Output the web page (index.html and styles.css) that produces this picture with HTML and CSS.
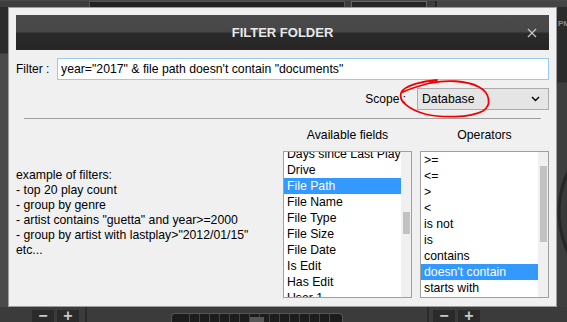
FILE: index.html
```html
<!DOCTYPE html>
<html>
  <head>
    <title>Filter Folder</title>
    <link rel="stylesheet" href="styles.css">
  </head>
  <body>
    <div class="app">
      <div class="top-strip">
        <div class="top-a"></div>
        <div class="top-b"></div>
        <div class="top-c"></div>
        <div class="top-d"></div>
      </div>
      <div class="left-strip"></div>

      <div class="dialog">
        <div class="titlebar">
          <span class="title">FILTER FOLDER</span>
          <svg class="close" width="10" height="10" viewBox="0 0 10 10">
            <path d="M1 1 L9 9 M9 1 L1 9" stroke="#c4c4c4" stroke-width="1.3"/>
          </svg>
        </div>

        <div class="filter-row">
          <span class="label">Filter :</span>
          <input class="filter-input" type="text" value='year="2017" &amp; file path doesn&#39;t contain "documents"'>
        </div>

        <div class="scope-row">
          <span class="label">Scope :</span>
          <div class="select">
            <span>Database</span>
            <svg class="chevron" width="9" height="6" viewBox="0 0 9 6">
              <polyline points="1,1 4.5,4.5 8,1" fill="none" stroke="#000" stroke-width="1.4"/>
            </svg>
          </div>
        </div>

        <div class="sep"></div>

        <div class="lower">
          <div class="examples">
            <div>example of filters:</div>
            <div>- top 20 play count</div>
            <div>- group by genre</div>
            <div>- artist contains "guetta" and year&gt;=2000</div>
            <div>- group by artist with lastplay&gt;"2012/01/15"</div>
            <div>etc...</div>
          </div>

          <div class="col">
            <div class="col-title">Available fields</div>
            <div class="listbox">
              <div class="items fields-items">
                <div class="item">Days since Last Played</div>
                <div class="item">Drive</div>
                <div class="item selected">File Path</div>
                <div class="item">File Name</div>
                <div class="item">File Type</div>
                <div class="item">File Size</div>
                <div class="item">File Date</div>
                <div class="item">Is Edit</div>
                <div class="item">Has Edit</div>
                <div class="item">User 1</div>
              </div>
              <div class="scrollbar">
                <div class="thumb fields-thumb"></div>
              </div>
            </div>
          </div>

          <div class="col">
            <div class="col-title">Operators</div>
            <div class="listbox">
              <div class="items">
                <div class="item">&gt;=</div>
                <div class="item">&lt;=</div>
                <div class="item">&gt;</div>
                <div class="item">&lt;</div>
                <div class="item">is not</div>
                <div class="item">is</div>
                <div class="item">contains</div>
                <div class="item selected">doesn't contain</div>
                <div class="item">starts with</div>
              </div>
              <div class="scrollbar">
                <div class="thumb ops-thumb"></div>
              </div>
            </div>
          </div>
        </div>

        <!-- red marker scribble around the scope box -->
        <svg class="scribble" width="110" height="50" viewBox="390 74 110 50">
          <path d="M437 80 C424 81 404 85 401 93 C398 102 411 110 425 114 C441 118 470 118 483 111 C492 105 490 93 479 87 C466 80 446 80 430 83 C419 86 409 89 403 92"
                fill="none" stroke="#f20000" stroke-width="1.8" stroke-linecap="round"/>
        </svg>
      </div>

      <div class="right-strip">
        <span class="pm">PM</span>
        <svg class="platter" width="10" height="240" viewBox="0 0 10 240">
          <circle cx="96" cy="125" r="94" fill="#3a3a3a" stroke="#262626" stroke-width="3"/>
        </svg>
      </div>

      <div class="bottom-strip">
        <div class="btn">&minus;</div>
        <div class="btn">+</div>
        <div class="vline"></div>
        <div class="slider">
          <div class="ticks"></div>
          <div class="knob"></div>
        </div>
        <div class="vline right"></div>
        <div class="btn">&minus;</div>
        <div class="btn">+</div>
      </div>
    </div>
  </body>
</html>
```

FILE: styles.css
```css
body {
  margin: 0;
  background-color: #3a3a3a;
  font-family: "Liberation Sans", Arial, sans-serif;
  font-size: 12px;
  color: #000;
}

.app {
  display: grid;
  grid-template-columns: 8px 549px 10px;
  grid-template-rows: 7px 300px 15px;
  width: 567px;
  height: 322px;
  overflow: hidden;
}

/* background of the app behind the dialog */
.top-strip {
  grid-column: 1 / 4;
  display: flex;
  background-color: #3c3c3c;
  border-top: 1px solid #4a4a4a;
}
.top-a {
  width: 80px;
  background-color: #3e3e3e;
}
.top-b {
  margin-left: 9px;
  width: 254px;
  background-color: #222;
  border: 1px solid #555;
  border-bottom: none;
}
.top-c {
  margin-left: 6px;
  width: 74px;
  background-color: #262626;
  border: 1px solid #666;
  border-bottom: none;
}
.top-d {
  margin-left: 8px;
  flex: 1;
  background-color: #444;
  border-left: 2px solid #262626;
}

.left-strip {
  background: linear-gradient(#2c2c2c 0, #2c2c2c 46px, #4a4a4a 47px);
}

.right-strip {
  position: relative;
  background: linear-gradient(#2b2b2b 0, #2b2b2b 75px, #3e3e3e 76px);
  overflow: hidden;
}
.pm {
  position: absolute;
  left: 1px;
  top: 12px;
  font-size: 8px;
  font-weight: bold;
  color: #8a8a8a;
}
.platter {
  position: absolute;
  left: 0;
  top: 80px;
}

.bottom-strip {
  grid-column: 1 / 4;
  display: flex;
  align-items: flex-end;
  background-color: #3b3b3b;
  padding-left: 32px;
}
.btn {
  width: 22px;
  height: 12px;
  margin-right: 3px;
  background-color: #2a2a2a;
  color: #c8c8c8;
  font-size: 16px;
  font-weight: bold;
  line-height: 11px;
  text-align: center;
  overflow: hidden;
}
.vline {
  width: 2px;
  height: 15px;
  margin-left: 3px;
  background-color: #2a2a2a;
}
.vline.right {
  margin-left: 84px;
  margin-right: 4px;
}
.slider {
  position: relative;
  margin-left: 84px;
  width: 170px;
  height: 8px;
  background-color: #1c1c1c;
  border: 1px solid #555;
  border-bottom: none;
  border-radius: 4px 4px 0 0;
}
.ticks {
  height: 8px;
  margin: 0 8px;
  background: repeating-linear-gradient(90deg, transparent 0, transparent 9px, #444 9px, #444 10px);
}
.knob {
  position: absolute;
  left: 78px;
  top: 3px;
  width: 14px;
  height: 6px;
  background-color: #555;
}

/* the dialog */
.dialog {
  position: relative;
  display: flex;
  flex-direction: column;
  background-color: #f0f0f0;
  border: 1px solid #9c9c9c;
  padding: 7px 7px 8px 7px;
}

.titlebar {
  position: relative;
  height: 35px;
  display: flex;
  align-items: center;
  justify-content: center;
  background: linear-gradient(#4a4a4a 0, #474747 17px, #2a2a2a 18px, #262626 100%);
}
.title {
  font-weight: bold;
  font-size: 13px;
  color: #e8e8e8;
}
.close {
  position: absolute;
  right: 12px;
  top: 13px;
}

.filter-row {
  display: flex;
  align-items: center;
  margin-top: 8px;
  height: 22px;
}
.filter-row .label {
  width: 41px;
}
.filter-input {
  flex: 1;
  height: 22px;
  box-sizing: border-box;
  margin: 0;
  padding: 0 3px;
  border: 1px solid #99c9ef;
  background-color: #fff;
  font-family: "Liberation Sans", Arial, sans-serif;
  font-size: 12.25px;
  color: #000;
  outline: none;
}

.scope-row {
  display: flex;
  justify-content: flex-end;
  align-items: center;
  margin-top: 8px;
  height: 22px;
}
.scope-row .label {
  margin-right: 11px;
}
.select {
  width: 132px;
  height: 22px;
  box-sizing: border-box;
  display: flex;
  align-items: center;
  justify-content: space-between;
  padding: 0 8px 0 4px;
  background-color: #e5e5e5;
  border: 1px solid #acacac;
  font-size: 12.25px;
}

.sep {
  margin: 8px 8px 0 8px;
  height: 1px;
  background-color: #a0a0a0;
}

.lower {
  display: flex;
  margin-top: 8px;
}
.examples {
  flex: 1;
  margin-top: 41px;
  font-size: 12.25px;
  line-height: 15px;
}
.col {
  width: 129px;
  margin-left: 8px;
  display: flex;
  flex-direction: column;
}
.col-title {
  height: 16px;
  line-height: 16px;
  text-align: center;
  font-size: 12.25px;
}
.listbox {
  margin-top: 8px;
  height: 147px;
  box-sizing: border-box;
  display: flex;
  background-color: #fff;
  border: 1px solid #a0a0a0;
}
.items {
  flex: 1;
  overflow: hidden;
}
.fields-items .item:first-child {
  margin-top: -6px;
}
.item {
  height: 16px;
  line-height: 16px;
  padding-left: 3px;
  white-space: nowrap;
  overflow: hidden;
  font-size: 12.25px;
}
.item.selected {
  background-color: #3399ff;
  color: #fff;
}
.scrollbar {
  width: 10px;
  background-color: #f0f0f0;
}
.thumb {
  margin-left: 2px;
  width: 7px;
  background-color: #c2c2c2;
}
.fields-thumb {
  margin-top: 60px;
  height: 22px;
}
.ops-thumb {
  margin-top: 14px;
  height: 76px;
}

.scribble {
  position: absolute;
  left: 381px;
  top: 66px;
}
```
